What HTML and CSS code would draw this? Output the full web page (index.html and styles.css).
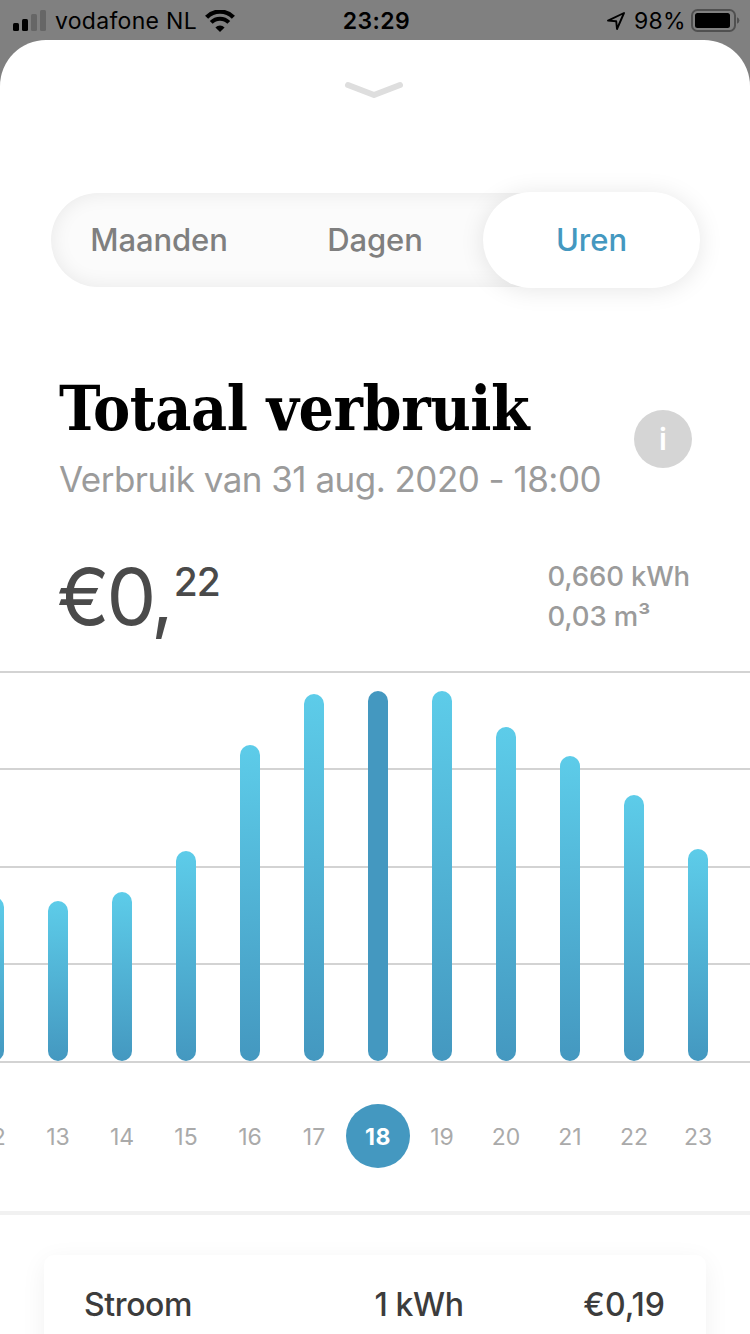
FILE: index.html
```html
<!DOCTYPE html>
<html lang="nl">
<head>
  <meta charset="UTF-8" />
  <meta name="viewport" content="width=device-width, initial-scale=1.0"/>
  <title>Totaal verbruik</title>
  <link rel="stylesheet" href="styles.css">
</head>
<body>
  <header class="status-bar">
    <div class="status-left">
      <svg class="signal" width="34" height="22" viewBox="0 0 34 22">
        <rect x="0" y="13" width="6" height="8" rx="1.5"/>
        <rect x="9" y="9" width="6" height="12" rx="1.5"/>
        <rect x="18" y="4" width="6" height="17" rx="1.5" fill="#666"/>
        <rect x="27" y="0" width="6" height="21" rx="1.5" fill="#666"/>
      </svg>
      <span class="carrier">vodafone NL</span>
      <svg class="wifi" width="30" height="22" viewBox="0 0 30 22">
        <path d="M1.6 7.2A19 19 0 0 1 28.4 7.2" fill="none" stroke="#000" stroke-width="4.4"/>
        <path d="M6.2 12.4A12.3 12.3 0 0 1 23.8 12.4" fill="none" stroke="#000" stroke-width="4"/>
        <path d="M15 22L10.4 17.4A6.3 6.3 0 0 1 19.6 17.4Z"/>
      </svg>
    </div>
    <span class="time">23:29</span>
    <div class="status-right">
      <svg class="location" width="20" height="20" viewBox="0 0 20 20">
        <path d="M2 9.6L18 2L11 18L10.2 10.2Z" fill="none" stroke="#000" stroke-width="1.9" stroke-linejoin="round"/>
      </svg>
      <span class="percent">98%</span>
      <svg class="battery" width="49" height="24" viewBox="0 0 49 24">
        <rect x="1" y="1" width="43" height="21" rx="5.5" fill="none" stroke="#505050" stroke-width="2"/>
        <rect x="4" y="4" width="35" height="15" rx="2.5"/>
        <path d="M46 8.2Q48.4 9.2 48.4 11.5T46 14.8Z" fill="#505050"/>
      </svg>
    </div>
  </header>

  <main class="sheet">
    <svg class="chevron" width="60" height="18" viewBox="0 0 60 18">
      <path d="M4 4L30 14L56 4" fill="none" stroke="#dedede" stroke-width="6" stroke-linecap="round" stroke-linejoin="round"/>
    </svg>

    <nav class="tabs">
      <span class="tab">Maanden</span>
      <span class="tab">Dagen</span>
      <span class="tab active">Uren</span>
    </nav>

    <section class="heading">
      <div class="titles">
        <h1>Totaal verbruik</h1>
        <p class="subtitle">Verbruik van 31 aug. 2020 - 18:00</p>
      </div>
      <span class="info">i</span>
    </section>

    <section class="totals">
      <p class="price">€0,<span class="cents">22</span></p>
      <div class="usage">
        <p>0,660 kWh</p>
        <p>0,03 m³</p>
      </div>
    </section>

    <section class="chart">
      <div class="bar" style="height: 164px"></div>
      <div class="bar" style="height: 160px"></div>
      <div class="bar" style="height: 169px"></div>
      <div class="bar" style="height: 210px"></div>
      <div class="bar" style="height: 316px"></div>
      <div class="bar" style="height: 367px"></div>
      <div class="bar selected" style="height: 370px"></div>
      <div class="bar" style="height: 370px"></div>
      <div class="bar" style="height: 334px"></div>
      <div class="bar" style="height: 305px"></div>
      <div class="bar" style="height: 266px"></div>
      <div class="bar" style="height: 212px"></div>
    </section>

    <div class="hours">
      <span class="hour">12</span>
      <span class="hour">13</span>
      <span class="hour">14</span>
      <span class="hour">15</span>
      <span class="hour">16</span>
      <span class="hour">17</span>
      <span class="hour selected">18</span>
      <span class="hour">19</span>
      <span class="hour">20</span>
      <span class="hour">21</span>
      <span class="hour">22</span>
      <span class="hour">23</span>
    </div>

    <section class="details">
      <div class="card">
        <span class="name">Stroom</span>
        <span class="amount">1 kWh</span>
        <span class="cost">€0,19</span>
      </div>
    </section>
  </main>
</body>
</html>
```
FILE: styles.css
```css
* {
  margin: 0;
  padding: 0;
  box-sizing: border-box;
}

body {
  height: 1334px;
  overflow: hidden;
  background: #808080;
  font-family: Inter, sans-serif;
}

svg {
  display: block;
  flex: none;
}

.status-bar {
  display: grid;
  grid-template-columns: 1fr auto 1fr;
  align-items: center;
  height: 40px;
  padding: 0 10px 0 13px;
  font-size: 23px;
  line-height: 42px;
}

.status-left,
.status-right {
  display: flex;
  align-items: center;
  height: 40px;
}

.status-right {
  justify-content: flex-end;
}

.carrier {
  margin: 0 8px 0 8px;
  letter-spacing: 0.3px;
}

.time {
  font-weight: 600;
  letter-spacing: 0.4px;
}

.percent {
  margin: 0 5px 0 8px;
  letter-spacing: 0.3px;
}

.sheet {
  height: 1294px;
  background: #fff;
  border-radius: 46px 46px 0 0;
  overflow: hidden;
}

.chevron {
  margin: 41px auto 0 344px;
}

.tabs {
  display: grid;
  grid-template-columns: repeat(3, 216px);
  height: 94px;
  width: 648px;
  margin: 94px 0 0 51px;
  border-radius: 47px;
  background: #fbfbfb;
  box-shadow: inset 0 0 20px rgba(0, 0, 0, 0.08);
}

.tab {
  font-size: 31px;
  font-weight: 500;
  line-height: 94px;
  letter-spacing: -0.1px;
  text-align: center;
  color: #7f7f7f;
}

.tab.active {
  width: 217px;
  height: 96px;
  margin-top: -1px;
  border-radius: 48px;
  background: #fff;
  color: #4498c0;
  line-height: 95px;
  letter-spacing: 0;
  box-shadow: 0 2px 24px rgba(0, 0, 0, 0.1);
}

.heading {
  display: flex;
  justify-content: space-between;
  align-items: center;
  margin-top: 82px;
  padding: 0 58px 0 59px;
}

h1 {
  font-family: "DejaVu Serif Condensed", "DejaVu Serif", serif;
  font-size: 62px;
  font-stretch: condensed;
  font-weight: bold;
  line-height: 80px;
  white-space: nowrap;
  letter-spacing: -0.4px;
  color: #000;
}

.subtitle {
  font-size: 35px;
  line-height: 60px;
  white-space: nowrap;
  letter-spacing: -0.52px;
  color: #9b9b9b;
}

.info {
  width: 58px;
  height: 58px;
  border-radius: 50%;
  background: #d5d5d5;
  color: #fff;
  font-size: 30px;
  font-weight: 600;
  line-height: 58px;
  text-align: center;
}

.totals {
  display: flex;
  justify-content: space-between;
  height: 162px;
  padding: 47px 60px 0 57px;
}

.price {
  display: flex;
  font-size: 79px;
  line-height: 80px;
  letter-spacing: -3.2px;
  color: #4a4a4a;
}

.cents {
  margin-left: 3px;
  font-size: 39px;
  font-weight: 500;
  line-height: 52px;
  letter-spacing: -1px;
}

.usage {
  font-size: 27.5px;
  font-weight: 500;
  line-height: 40px;
  letter-spacing: -0.15px;
  color: #9b9b9b;
}

.chart {
  display: flex;
  align-items: flex-end;
  gap: 44px;
  height: 392px;
  padding-bottom: 2px;
  background: linear-gradient(
    #d3d3d3 2px, #fff 2px 97px,
    #d3d3d3 97px 99px, #fff 99px 195px,
    #d3d3d3 195px 197px, #fff 197px 292px,
    #d3d3d3 292px 294px, #fff 294px 390px,
    #d3d3d3 390px
  );
}

.bar {
  flex: none;
  width: 20px;
  border-radius: 10px;
  background: linear-gradient(#5dcce9, #4498c0);
}

.bar:first-child {
  margin-left: -16px;
}

.bar.selected {
  background: #4498c0;
}

.hours {
  display: flex;
  height: 148px;
  margin-left: -38px;
  padding-top: 41px;
}

.hour {
  flex: none;
  width: 64px;
  height: 64px;
  font-size: 23px;
  line-height: 66px;
  text-align: center;
  color: #aaa;
}

.hour.selected {
  border-radius: 50%;
  background: #4498c0;
  color: #fff;
  font-weight: 700;
  letter-spacing: 0.5px;
}

.details {
  padding: 40px 44px 0;
  border-top: 4px solid #f1f1f1;
}

.card {
  display: grid;
  grid-template-columns: 2fr 1fr 1fr;
  height: 200px;
  padding: 0 41px 0 40px;
  border-radius: 10px;
  font-size: 32px;
  font-weight: 500;
  line-height: 100px;
  letter-spacing: -0.4px;
  color: #3c3c3c;
  box-shadow: 0 6px 26px rgba(0, 0, 0, 0.06);
}

.cost {
  text-align: right;
  letter-spacing: 0;
}
```
